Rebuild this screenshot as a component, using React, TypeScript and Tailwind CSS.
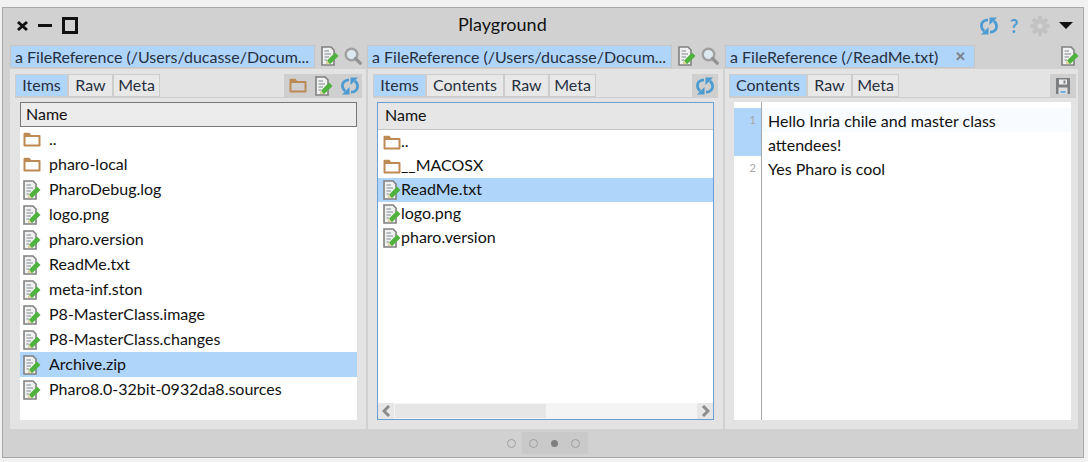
import type { ReactNode } from "react";

const FONT = "font-['Lato',sans-serif]";

const TAB_WIDTHS: Record<string, string> = {
  Items: "w-[53px]",
  Contents: "w-[78px]",
  Raw: "w-[45px]",
  Meta: "w-[47px]",
};

function FolderIcon() {
  return (
    <svg width="18" height="15" viewBox="0 0 18 15" className="shrink-0">
      <path
        fillRule="evenodd"
        d="M0.5 3 V13.5 Q0.5 14.5 1.5 14.5 H16.5 Q17.5 14.5 17.5 13.5 V4 Q17.5 3 16.5 3 H8 L6.5 0.8 H1.5 Q0.5 0.8 0.5 2 Z M2.5 5 H15.5 V12.5 H2.5 Z"
        fill="#bd8a55"
      />
    </svg>
  );
}

function DocIcon() {
  return (
    <svg width="18" height="20" viewBox="0 0 18 20" className="shrink-0">
      <path d="M1 1 H10 L13 4 V19 H1 Z" fill="#f1f1f1" stroke="#808080" strokeWidth="1.6" />
      <path d="M3.5 5 H8 M3.5 8 H10 M3.5 11 H8 M3.5 14 H6" stroke="#7f8a90" strokeWidth="1.1" />
      <path d="M5 18 L6.2 14.5 L14 6.5 L17.5 10 L9.2 18 Z" fill="#4fb23f" />
      <path d="M5 18 L6.2 14.5 L8.8 18 Z" fill="#e8d6a0" />
    </svg>
  );
}

function SearchIcon() {
  return (
    <svg width="18" height="18" viewBox="0 0 18 18" className="shrink-0">
      <circle cx="7.5" cy="7.5" r="5.8" fill="#dce9ee" stroke="#a0a0a0" strokeWidth="2.4" />
      <path d="M11.5 11.5 L16.2 16.2" stroke="#929292" strokeWidth="3.2" strokeLinecap="round" />
    </svg>
  );
}

function SyncIcon() {
  return (
    <svg width="18" height="18" viewBox="0 0 18 18" className="shrink-0" fill="none">
      <path d="M8 2.8 C3.5 2.8 0.8 6 1.6 10 C2 12 3 13.2 4.2 14" stroke="#4c9bd2" strokeWidth="2.8" />
      <path d="M1 17.5 L8.5 17.5 L8.5 10 Z" fill="#4c9bd2" />
      <path d="M10 15.2 C14.5 15.2 17.2 12 16.4 8 C16 6 15 4.8 13.8 4" stroke="#4c9bd2" strokeWidth="2.8" />
      <path d="M17 0.5 L9.5 0.5 L9.5 8 Z" fill="#4c9bd2" />
    </svg>
  );
}

function SaveIcon() {
  return (
    <svg width="14" height="16" viewBox="0 0 14 16" className="shrink-0">
      <path d="M0 0 H14 V16 H0 Z" fill="#7d8083" />
      <rect x="3" y="1.5" width="8" height="5" fill="#eeeeee" />
      <rect x="7.5" y="2.5" width="2" height="3" fill="#7d8083" />
      <rect x="2.5" y="9.5" width="9" height="6.5" fill="#dedede" />
      <rect x="4.5" y="13" width="5" height="2" fill="#6fb0dc" />
    </svg>
  );
}

function GearIcon() {
  const teeth = [0, 45, 90, 135];
  return (
    <svg width="20" height="20" viewBox="0 0 20 20" className="shrink-0">
      {teeth.map((a) => (
        <rect key={a} x="8" y="0" width="4" height="20" rx="1" fill="#c2c2c2" transform={`rotate(${a} 10 10)`} />
      ))}
      <circle cx="10" cy="10" r="7" fill="#c2c2c2" />
      <circle cx="10" cy="10" r="2.6" fill="#d4d4d4" />
    </svg>
  );
}

function DocRow({ icon, name, selected, tight }: { icon: ReactNode; name: string; selected?: boolean; tight?: boolean }) {
  return (
    <div
      className={`flex items-center text-[#111] ${tight ? "h-6 pl-[5px]" : "h-[25px] pl-[3px]"} ${selected ? "bg-[#b0d5fb]" : ""}`}
    >
      <span className={`flex ${tight ? "w-[18px]" : "w-[26px]"} shrink-0`}>{icon}</span>
      <span className="-mt-[2px] leading-none">{name}</span>
    </div>
  );
}

function Tab({ label, active }: { label: string; active?: boolean }) {
  return (
    <div
      className={`flex h-[23px] ${TAB_WIDTHS[label]} items-center justify-center border border-[#cdcdcd] pb-[2px] text-[#27303f] ${active ? "bg-[#b0d5fb]" : "bg-[#e8e8e8]"}`}
    >
      {label}
    </div>
  );
}

function InspectorTitle({ label, width, close }: { label: string; width: string; close?: boolean }) {
  return (
    <div className={`flex h-[23px] ${width} shrink-0 items-center justify-between overflow-hidden border border-[#c6c6c6] bg-[#b0d5fb] pl-[4px] pr-[8px] pt-[1px] text-[#27303f]`}>
      <span className="whitespace-nowrap">{label}</span>
      {close && <span className="text-[13px] font-bold leading-none text-[#7a8088]">✕</span>}
    </div>
  );
}

const firstRows = [
  ["folder", ".."],
  ["folder", "pharo-local"],
  ["doc", "PharoDebug.log"],
  ["doc", "logo.png"],
  ["doc", "pharo.version"],
  ["doc", "ReadMe.txt"],
  ["doc", "meta-inf.ston"],
  ["doc", "P8-MasterClass.image"],
  ["doc", "P8-MasterClass.changes"],
  ["doc", "Archive.zip"],
  ["doc", "Pharo8.0-32bit-0932da8.sources"],
];

const secondRows = [
  ["folder", ".."],
  ["folder", "__MACOSX"],
  ["doc", "ReadMe.txt"],
  ["doc", "logo.png"],
  ["doc", "pharo.version"],
];

export default function App() {
  return (
    <div className={`h-[462px] w-[1088px] overflow-hidden bg-[#f1f1f1] pl-[2px] pt-[7px] text-[16px] ${FONT}`}>
      <div className="flex h-[451px] w-[1082px] flex-col border border-[#a8a8a8] bg-[#d1d1d1]">
        {/* title bar */}
        <div className="flex h-[35px] shrink-0 items-center">
          <div className="ml-[13px] flex w-[442px] items-center">
            <svg width="13" height="12" viewBox="0 0 13 12">
              <path d="M2 2 L11 10 M11 2 L2 10" stroke="#111" strokeWidth="3" />
            </svg>
            <div className="ml-[9px] h-[3px] w-[14px] bg-[#111]" />
            <div className="ml-[10px] h-[17px] w-[16px] border-[3px] border-[#111]" />
          </div>
          <div className="-mt-[2px] text-[18px] text-[#111]">Playground</div>
          <div className="ml-auto mr-[10px] flex items-center">
            <SyncIcon />
            <span className="ml-[12px] w-[9px] text-[18px] font-bold leading-none text-[#4c9bd2]">?</span>
            <span className="ml-[11px] flex"><GearIcon /></span>
            <svg width="14" height="7" viewBox="0 0 14 7" className="ml-[9px]">
              <path d="M0 0 H14 L7 7 Z" fill="#111" />
            </svg>
          </div>
        </div>

        {/* inspector columns */}
        <div className="flex flex-1 gap-[2px] pl-[7px] pr-[4px]">
          {/* first pane */}
          <div className="flex w-[356px] flex-col">
            <div className="flex h-[26px] items-center">
              <InspectorTitle label="a FileReference (/Users/ducasse/Docum..." width="w-[305px]" />
              <div className="ml-[6px] flex items-center gap-[5px]">
                <DocIcon />
                <SearchIcon />
              </div>
            </div>
            <div className="flex h-[360px] flex-col bg-[#e3e3e3] pl-[5px] pr-[4px] pt-[5px]">
              <div className="flex h-[24px] border-b border-[#cdcdcd]">
                <Tab label="Items" active />
                <Tab label="Raw" />
                <Tab label="Meta" />
                <div className="ml-auto flex w-[78px] items-center justify-between bg-[#cfcfcf] pl-[5px] pr-[3px]">
                  <FolderIcon />
                  <DocIcon />
                  <SyncIcon />
                </div>
              </div>
              <div className="mx-[5px] mt-[4px] flex h-[318px] flex-col bg-white">
                <div className="flex h-[25px] shrink-0 items-center border border-[#777] bg-[#ececec] pb-[2px] pl-[5px] text-[#111]">Name</div>
                {firstRows.map(([kind, name]) => (
                  <DocRow
                    key={name}
                    name={name}
                    selected={name === "Archive.zip"}
                    icon={kind === "folder" ? <FolderIcon /> : <DocIcon />}
                  />
                ))}
              </div>
            </div>
          </div>

          {/* second pane */}
          <div className="flex w-[355px] flex-col">
            <div className="-ml-[1px] flex h-[26px] items-center">
              <InspectorTitle label="a FileReference (/Users/ducasse/Docum..." width="w-[305px]" />
              <div className="ml-[6px] flex items-center gap-[5px]">
                <DocIcon />
                <SearchIcon />
              </div>
            </div>
            <div className="flex h-[360px] flex-col bg-[#e3e3e3] px-[5px] pt-[5px]">
              <div className="flex h-[24px] border-b border-[#cdcdcd]">
                <Tab label="Items" active />
                <Tab label="Contents" />
                <Tab label="Raw" />
                <Tab label="Meta" />
                <div className="ml-auto flex w-[26px] items-center justify-center bg-[#cfcfcf]">
                  <SyncIcon />
                </div>
              </div>
              <div className="mx-[4px] mt-[4px] flex h-[318px] flex-col border border-[#6a9fd8] bg-white">
                <div className="flex h-[27px] shrink-0 items-center border-b border-[#c4c4c4] bg-[#e6e6e6] pb-[2px] pl-[7px] text-[#111]">Name</div>
                <div className="flex-1">
                  {secondRows.map(([kind, name]) => (
                    <DocRow
                      key={name}
                      name={name}
                      tight
                      selected={name === "ReadMe.txt"}
                      icon={kind === "folder" ? <FolderIcon /> : <DocIcon />}
                    />
                  ))}
                </div>
                {/* scrollbar */}
                <div className="flex h-[16px] shrink-0 bg-[#f4f4f4]">
                  <div className="flex w-[16px] items-center justify-center bg-[#e6e6e6]">
                    <svg width="9" height="12" viewBox="0 0 9 12"><path d="M7 1 L2 6 L7 11" fill="none" stroke="#8c8c8c" strokeWidth="3" /></svg>
                  </div>
                  <div className="ml-[1px] mt-[1px] h-[14px] w-[151px] bg-[#e6e6e6]" />
                  <div className="ml-auto flex w-[16px] items-center justify-center bg-[#e6e6e6]">
                    <svg width="9" height="12" viewBox="0 0 9 12"><path d="M2 1 L7 6 L2 11" fill="none" stroke="#8c8c8c" strokeWidth="3" /></svg>
                  </div>
                </div>
              </div>
            </div>
          </div>

          {/* third pane */}
          <div className="flex w-[353px] flex-col">
            <div className="flex h-[26px] items-center">
              <InspectorTitle label="a FileReference (/ReadMe.txt)" width="w-[250px]" close />
              <div className="-mr-[1px] ml-auto flex">
                <DocIcon />
              </div>
            </div>
            <div className="flex h-[360px] flex-col bg-[#e3e3e3] pl-[4px] pr-[2px] pt-[5px]">
              <div className="flex h-[24px] border-b border-[#cdcdcd]">
                <Tab label="Contents" active />
                <Tab label="Raw" />
                <Tab label="Meta" />
                <div className="ml-auto flex w-[26px] items-center justify-center bg-[#cfcfcf]">
                  <SaveIcon />
                </div>
              </div>
              <div className="mx-[5px] mt-[4px] flex h-[318px] bg-white pt-[6px] leading-[24px] text-[#111]">
                <div className="-mt-[6px] w-[28px] shrink-0 border-r border-[#a8a8a8] pt-[6px] text-right text-[11px] text-[#a6a6a6]">
                  <div className="h-[48px] bg-[#b0d5fb] pr-[5px]">1</div>
                  <div className="h-[24px] pr-[5px]">2</div>
                </div>
                <div className="flex-1">
                  <div className="h-[24px] bg-[#f8fbff] pl-[6px] pt-[1px]">Hello Inria chile and master class</div>
                  <div className="h-[24px] pl-[6px] pt-[1px]">attendees!</div>
                  <div className="h-[24px] pl-[6px] pt-[1px]">Yes Pharo is cool</div>
                </div>
              </div>
            </div>
          </div>
        </div>

        {/* pager */}
        <div className="flex h-[28px] shrink-0 items-center justify-center pl-[8px]">
          <div className="mr-[6px] h-[9px] w-[9px] rounded-full border border-[#a0a0a0]" />
          <div className="flex h-[22px] w-[66px] items-center justify-center gap-[13px] bg-[#c9c9c9]">
            <div className="h-[9px] w-[9px] rounded-full border border-[#a0a0a0]" />
            <div className="h-[7px] w-[7px] rounded-full bg-[#7f7f7f]" />
            <div className="h-[9px] w-[9px] rounded-full border border-[#a0a0a0]" />
          </div>
        </div>
      </div>
    </div>
  );
}
